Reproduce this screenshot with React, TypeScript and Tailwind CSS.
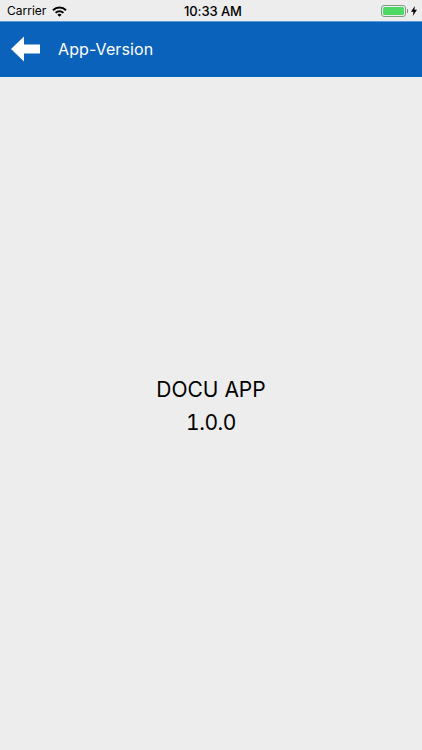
export default function App() {
  return (
    <div className="w-[422px] h-[750px] flex flex-col bg-[#ededed] text-black font-['Inter','Liberation_Sans',sans-serif] overflow-hidden">
      <div className="h-[21px] flex items-center justify-between pl-[7px] pr-[5px] relative">
        <div className="flex items-center gap-[6px]">
          <span className="text-[12px] leading-none">Carrier</span>
          <svg width="15" height="11" viewBox="0 0 15 11" className="mt-[2px]">
            <path d="M0.3 3.6 A10.2 10.2 0 0 1 14.7 3.6 L13.3 5 A8.2 8.2 0 0 0 1.7 5 Z" fill="#000" />
            <path d="M2.9 6.2 A6.6 6.6 0 0 1 12.1 6.2 L10.7 7.6 A4.6 4.6 0 0 0 4.3 7.6 Z" fill="#000" />
            <path d="M5.4 8.7 A3 3 0 0 1 9.6 8.7 L7.5 10.8 Z" fill="#000" />
          </svg>
        </div>
        <span className="absolute left-[184px] top-[3px] text-[13px] leading-[16px] font-medium tracking-[-0.1px]">10:33 AM</span>
        <div className="flex items-center gap-[3px]">
          <div className="flex items-center">
            <div className="w-[25px] h-[12px] rounded-[3px] border border-[#7f9c84] p-[1px]">
              <div className="w-full h-full rounded-[1.5px] bg-[#4cd964]" />
            </div>
            <div className="w-[1px] h-[4px] bg-[#8a8a8a] ml-[1px]" />
          </div>
          <svg width="6" height="10" viewBox="0 0 6 10">
            <path d="M3.8 0 L0 5.8 H2.5 L1.8 10 L6 3.8 H3.4 Z" fill="#000" />
          </svg>
        </div>
      </div>
      <div className="h-[56px] bg-[#0b62bb] border-t border-[#5b9ad8] flex items-center pl-[11px] pb-[2px]">
        <svg width="29" height="26" viewBox="0 0 29 26">
          <path d="M0 13 L13 0.5 V8.5 H29 V17.5 H13 V25.5 Z" fill="#fff" />
        </svg>
        <span className="ml-[18px] text-[16px] tracking-[0.1px] text-white">App-Version</span>
      </div>
      <div className="flex-1 flex flex-col items-center pt-[296px] text-[21px] leading-[33px]">
        <span>DOCU APP</span>
        <span className="tabular-nums tracking-[-0.4px]">1.0.0</span>
      </div>
    </div>
  );
}
